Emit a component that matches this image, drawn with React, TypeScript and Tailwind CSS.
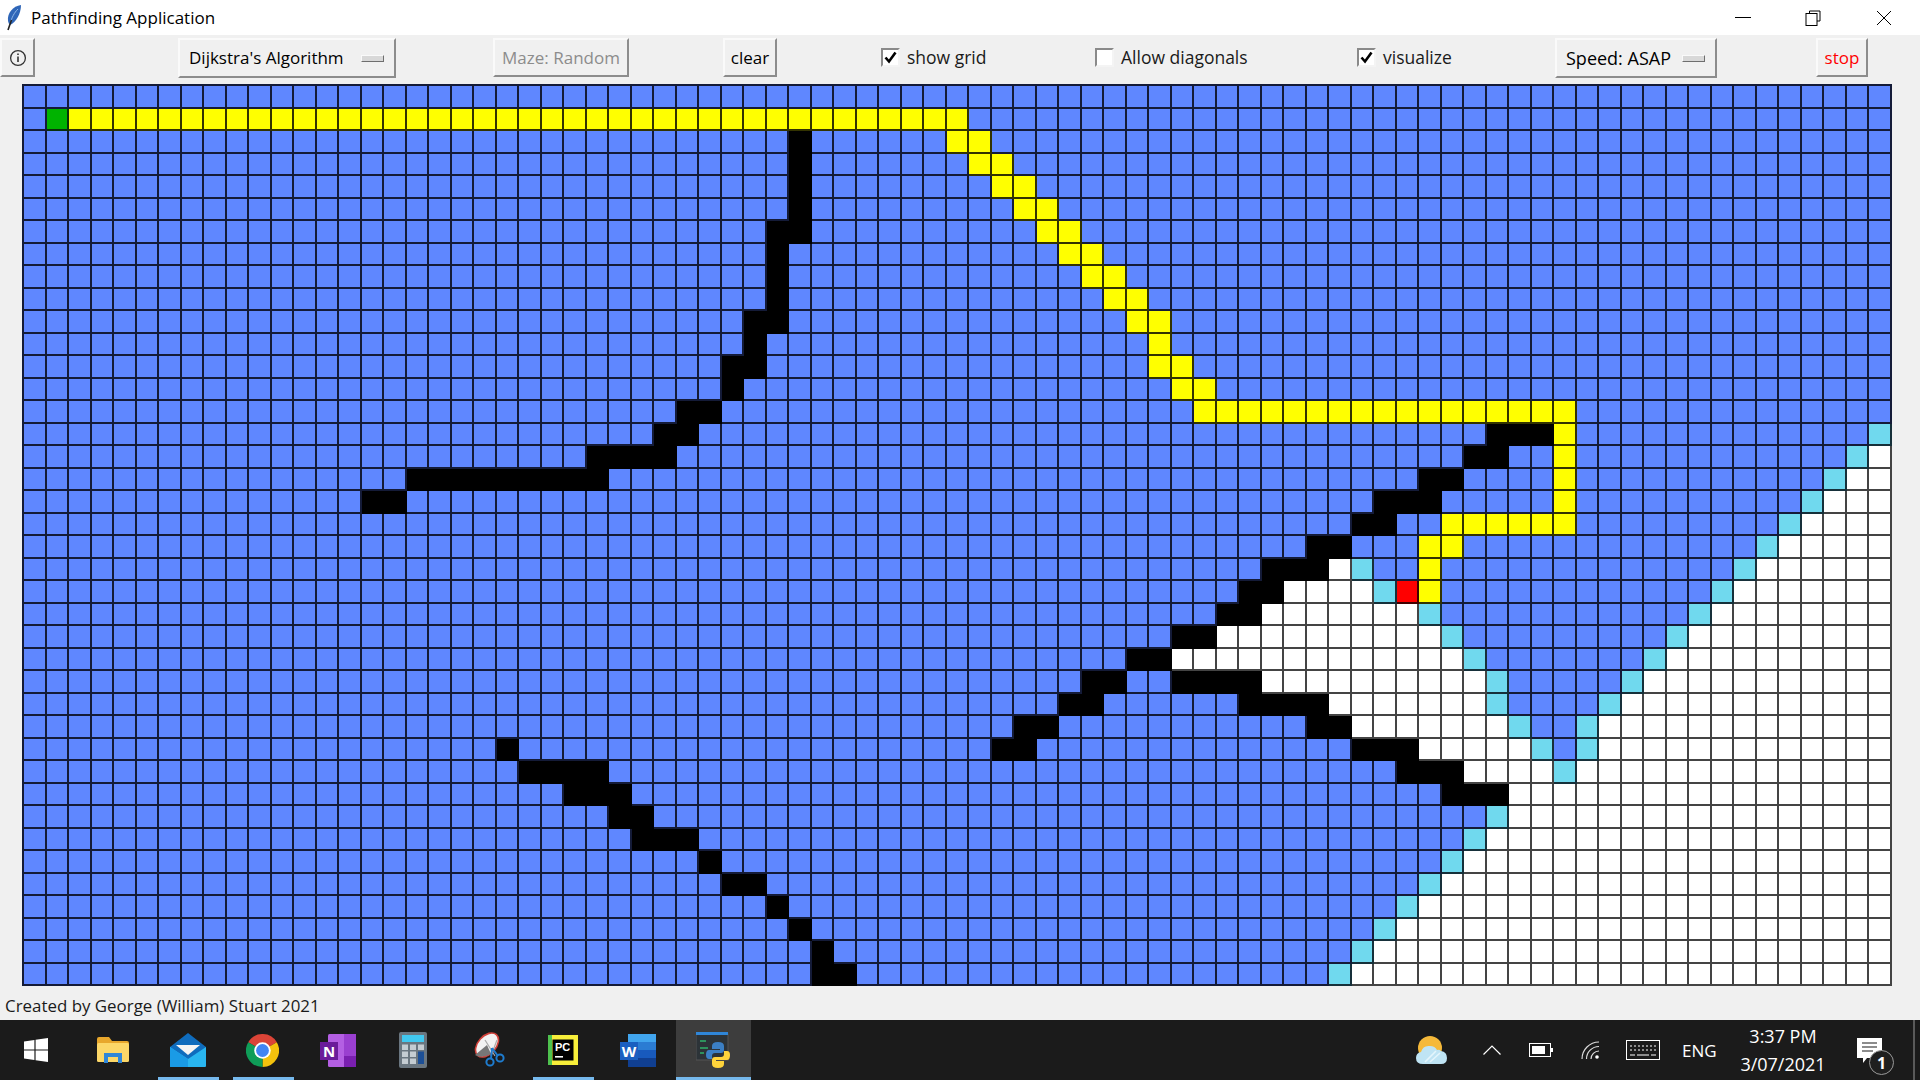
import type { ReactNode } from "react";

const COLS = 83;
const ROWS = 40;

// [row, from col, to col] ranges, painted in order over the blue background
const WALLS: number[][] = [
  [2, 34, 34], [3, 34, 34], [4, 34, 34], [5, 34, 34], [6, 33, 34], [7, 33, 33], [8, 33, 33], [9, 33, 33],
  [10, 32, 33], [11, 32, 32], [12, 31, 32], [13, 31, 31], [14, 29, 30], [15, 28, 29], [16, 25, 28], [17, 17, 25], [18, 15, 16],
  [15, 65, 67], [16, 64, 65], [17, 62, 63], [18, 60, 62], [19, 59, 60], [20, 57, 58], [21, 55, 57], [22, 54, 55], [23, 53, 54],
  [24, 51, 52], [25, 49, 50], [26, 47, 48], [27, 46, 47], [28, 44, 45], [29, 43, 44],
  [26, 51, 54], [27, 54, 57], [28, 57, 58], [29, 59, 61], [30, 61, 63], [31, 63, 65],
  [29, 21, 21], [30, 22, 25], [31, 24, 26], [32, 26, 27], [33, 27, 29], [34, 30, 30], [35, 31, 32], [36, 33, 33],
  [37, 34, 34], [38, 35, 35], [39, 35, 36],
];

const PATH: number[][] = [
  [1, 2, 41], [2, 41, 42], [3, 42, 43], [4, 43, 44], [5, 44, 45], [6, 45, 46], [7, 46, 47], [8, 47, 48], [9, 48, 49],
  [10, 49, 50], [11, 50, 50], [12, 50, 51], [13, 51, 52], [14, 52, 68], [15, 68, 68], [16, 68, 68], [17, 68, 68], [18, 68, 68],
  [19, 63, 68], [20, 62, 63], [21, 62, 62], [22, 62, 62],
];

const VISITED: number[][] = [
  [16, 82, 82], [17, 81, 82], [18, 80, 82], [19, 79, 82], [20, 78, 82], [21, 58, 58], [21, 77, 82], [22, 56, 59], [22, 76, 82],
  [23, 55, 61], [23, 75, 82], [24, 53, 62], [24, 74, 82], [25, 51, 63], [25, 73, 82], [26, 55, 64], [26, 72, 82], [27, 58, 64], [27, 71, 82],
  [28, 59, 65], [28, 70, 82], [29, 62, 66], [29, 70, 82], [30, 64, 67], [30, 69, 82], [31, 66, 82], [32, 66, 82], [33, 65, 82],
  [34, 64, 82], [35, 63, 82], [36, 62, 82], [37, 61, 82], [38, 60, 82], [39, 59, 82],
];

const FRONTIER: number[][] = [
  [15, 82], [16, 81], [17, 80], [18, 79], [19, 78], [20, 77], [21, 59], [21, 76], [22, 60], [22, 75], [23, 62], [23, 74], [24, 63], [24, 73],
  [25, 64], [25, 72], [26, 65], [26, 71], [27, 65], [27, 70], [28, 66], [28, 69], [29, 67], [29, 69], [30, 68], [32, 65], [33, 64],
  [34, 63], [35, 62], [36, 61], [37, 60], [38, 59], [39, 58],
];

const CELL_CLASS: Record<string, string> = {
  blue: "bg-[#5f87ff] border-[#141b38]",
  white: "bg-white border-[#444444]",
  yellow: "bg-[#ffff00] border-[#333300]",
  black: "bg-black border-black",
  cyan: "bg-[#70d9ee] border-[#16303a]",
  green: "bg-[#00b300] border-[#0a300a]",
  red: "bg-[#ff0000] border-[#400000]",
};

const buildGrid = () => {
  const grid: string[][] = Array.from({ length: ROWS }, () => Array(COLS).fill("blue"));
  const paint = (list: number[][], kind: string) => {
    list.forEach(([r, a, b]) => {
      for (let c = a; c <= b; c++) grid[r][c] = kind;
    });
  };
  paint(VISITED, "white");
  paint(WALLS, "black");
  paint(PATH, "yellow");
  FRONTIER.forEach(([r, c]) => (grid[r][c] = "cyan"));
  grid[1][1] = "green";
  grid[22][61] = "red";
  return grid;
};

const GRID = buildGrid();

const raised = "border-2 border-t-[#fafafa] border-l-[#fafafa] border-r-[#8c8c8c] border-b-[#8c8c8c] bg-[#f0f0f0]";
const uiFont = "font-['Open_Sans',sans-serif]";

const Indicator = () => (
  <span className="block w-[23px] h-[7px] border border-t-[#fafafa] border-l-[#fafafa] border-r-[#6e6e6e] border-b-[#6e6e6e] bg-[#d8d8d8]" />
);

const Check = ({ label, checked, width }: { label: string; checked?: boolean; width: string }) => (
  <div className={`flex items-start pt-[10px] ${width}`}>
    <span className="w-[19px] h-[19px] bg-white border-2 border-t-[#8a8a8a] border-l-[#8a8a8a] border-r-[#f4f4f4] border-b-[#f4f4f4] flex items-center justify-center">
      {checked && (
        <svg width="13" height="13" viewBox="0 0 13 13">
          <path d="M1.5 6.5 L5 10.5 L11.5 1.5" fill="none" stroke="#000" strokeWidth="2.6" />
        </svg>
      )}
    </span>
    <span className="ml-[7px] text-[17.5px] leading-[19px] text-[#1a1a1a]">{label}</span>
  </div>
);

const Feather = () => (
  <svg width="16" height="26" viewBox="0 0 16 26" className="ml-[6px]">
    <path d="M15 0 C7 1 1 8 2 16 C2.5 18 3 19 4 20 C10 17 15 9 15 0 Z" fill="#2f66b8" />
    <path d="M12 4 C8 8 6 12 4 19" fill="none" stroke="#8fb6e8" strokeWidth="1" />
    <path d="M5.5 15 L2 25" stroke="#222" strokeWidth="1.6" fill="none" />
  </svg>
);

const WindowControls = () => (
  <div className="ml-auto flex items-center">
    <span className="block w-[16px] h-[1px] bg-black mr-[54px]" />
    <svg width="16" height="16" viewBox="0 0 16 16" className="mr-[55px]">
      <path d="M4.5 3 V1 H15 V11 H12" fill="none" stroke="#000" />
      <rect x="1" y="3.5" width="11" height="12" fill="none" stroke="#000" />
    </svg>
    <svg width="16" height="16" viewBox="0 0 16 16" className="mr-[28px]">
      <path d="M1 1 L15 15 M15 1 L1 15" stroke="#000" strokeWidth="1" />
    </svg>
  </div>
);

const WinLogo = () => (
  <svg width="24" height="24" viewBox="0 0 24 24">
    <path d="M0 3.4 L10.4 2 V11.4 H0 Z M11.6 1.8 L24 0 V11.4 H11.6 Z M0 12.6 H10.4 V22 L0 20.6 Z M11.6 12.6 H24 V24 L11.6 22.2 Z" fill="#fff" />
  </svg>
);

const Explorer = () => (
  <svg width="32" height="26" viewBox="0 0 32 26">
    <path d="M0 2 Q0 0 2 0 H12 L15 4 H30 Q32 4 32 6 V8 H0 Z" fill="#e8a72c" />
    <rect x="0" y="6" width="32" height="19" rx="1.5" fill="#fcd768" />
    <path d="M7 26 V16 H25 V26 H21 V20 H11 V26 Z" fill="#2f86d8" />
  </svg>
);

const Mail = () => (
  <svg width="36" height="34" viewBox="0 0 36 34">
    <path d="M18 0 L36 14 V33 H0 V14 Z" fill="#0f6cbd" />
    <path d="M6 12 H30 L18 22 Z" fill="#f4f4f4" />
    <path d="M0 14 L18 26 L36 14 V33 Q36 34 35 34 H1 Q0 34 0 33 Z" fill="#29b6f0" />
    <path d="M0 14 L18 26 V34 H1 Q0 34 0 33 Z" fill="#1a9be6" />
  </svg>
);

const Chrome = () => (
  <svg width="33" height="33" viewBox="0 0 32 32">
    <path d="M16 16 L2.14 8 A16 16 0 0 1 29.86 8 Z" fill="#db4437" />
    <path d="M16 16 L29.86 8 A16 16 0 0 1 16 32 Z" fill="#f4c20d" />
    <path d="M16 16 L16 32 A16 16 0 0 1 2.14 8 Z" fill="#0f9d58" />
    <circle cx="16" cy="16" r="8" fill="#fff" />
    <circle cx="16" cy="16" r="6.2" fill="#4285f4" />
  </svg>
);

const OneNote = () => (
  <svg width="36" height="33" viewBox="0 0 36 33">
    <rect x="8" y="0" width="28" height="33" rx="1.5" fill="#b45fe3" />
    <rect x="24" y="0" width="12" height="33" fill="#9a3fd0" />
    <rect x="24" y="22" width="12" height="11" fill="#7a1fb0" />
    <rect x="0" y="8" width="18" height="18" fill="#6a1b9a" />
    <text x="9" y="22.5" textAnchor="middle" fontSize="15" fontWeight="700" fill="#fff" fontFamily="'Open Sans',sans-serif">N</text>
  </svg>
);

const Calculator = () => (
  <svg width="28" height="36" viewBox="0 0 28 36">
    <rect width="28" height="36" rx="2" fill="#6a7680" />
    <rect x="3" y="3" width="22" height="7" fill="#41c8f0" />
    {[12.5, 19.5, 26.5].map((y) => (
      <g key={y}>
        <rect x="3" y={y} width="6" height="5.5" fill="#c4ccd2" />
        <rect x="11" y={y} width="6" height="5.5" fill="#c4ccd2" />
      </g>
    ))}
    <rect x="19" y="12.5" width="6" height="5.5" fill="#c4ccd2" />
    <rect x="19" y="19.5" width="6" height="12.5" fill="#1c4f96" />
  </svg>
);

const Snip = () => (
  <svg width="34" height="36" viewBox="0 0 34 36">
    <ellipse cx="16" cy="13" rx="9" ry="14" transform="rotate(42 16 13)" fill="#f2f2f2" stroke="#d0413a" strokeWidth="1.6" />
    <path d="M4 23 L16 13 L20 22 Q10 27 4 23 Z" fill="#777" />
    <path d="M14 8 L24 24 M26 8 L20 24" stroke="#aaa" strokeWidth="1.2" fill="none" />
    <circle cx="19" cy="30" r="3.6" fill="none" stroke="#1e7ccf" strokeWidth="2" />
    <circle cx="29" cy="26" r="3.6" fill="none" stroke="#1e7ccf" strokeWidth="2" />
    <path d="M21 16 L20 27 M21 16 L27 24" stroke="#1e7ccf" strokeWidth="2" fill="none" />
  </svg>
);

const PyCharm = () => (
  <svg width="30" height="30" viewBox="0 0 30 30">
    <rect width="30" height="30" fill="#f7ee3a" />
    <path d="M0 0 H4 V30 H0 Z" fill="#4ec24e" />
    <rect x="4.5" y="4.5" width="21" height="21" fill="#000" />
    <text x="7" y="16" fontSize="11" fontWeight="700" fill="#fff" fontFamily="'Liberation Sans',sans-serif">PC</text>
    <rect x="7" y="21" width="8" height="1.6" fill="#fff" />
  </svg>
);

const Word = () => (
  <svg width="36" height="33" viewBox="0 0 36 33">
    <rect x="8" y="0" width="28" height="33" rx="1.5" fill="#2b7cd3" />
    <rect x="8" y="0" width="28" height="8" fill="#41a5ee" />
    <rect x="8" y="16" width="28" height="8" fill="#185abd" />
    <rect x="8" y="24" width="28" height="9" fill="#103f91" />
    <rect x="0" y="8" width="18" height="18" fill="#1a5fc0" />
    <text x="9" y="22.5" textAnchor="middle" fontSize="15" fontWeight="700" fill="#fff" fontFamily="'Open Sans',sans-serif">W</text>
  </svg>
);

const PythonApp = () => (
  <svg width="34" height="36" viewBox="0 0 34 36">
    <rect x="0" y="2" width="32" height="26" fill="#2c3338" stroke="#555" strokeWidth="1" />
    <rect x="0" y="0" width="32" height="3" fill="#2f86d8" />
    <path d="M4 9 H10 M4 16 H12 M4 21 H8" stroke="#2fb36a" strokeWidth="1.6" />
    <path d="M22 10 Q16 10 16 14 V17 H24 V18 H13 Q10 18 10 23 Q10 27 13 27 H16 V24 Q16 21 19 21 H25 Q28 21 28 18 V14 Q28 10 22 10 Z" fill="#3b7fc4" />
    <path d="M22 36 Q28 36 28 32 V29 H20 V28 H31 Q34 28 34 23 Q34 19 31 19 H28 V22 Q28 25 25 25 H19 Q16 25 16 28 V32 Q16 36 22 36 Z" fill="#ffd43b" />
  </svg>
);

const Weather = () => (
  <svg width="31" height="29" viewBox="0 0 31 29">
    <circle cx="14" cy="12" r="12" fill="#f5b93a" />
    <path d="M7 28 Q0 28 0 22 Q0 17 5 16 Q7 9 14 10 Q19 10 21 14 Q23 13 25 15 Q31 16 31 22 Q31 28 25 28 Z" fill="#bfe4f4" />
    <path d="M9 26 L20 15 M14 26 L24 17" stroke="#e4f5fc" strokeWidth="1.6" fill="none" />
  </svg>
);

const Tray = () => (
  <div className="flex items-center ml-auto text-white">
    <Weather />
    <svg width="18" height="10" viewBox="0 0 18 10" className="ml-[36px]">
      <path d="M0.5 9.5 L9 1 L17.5 9.5" fill="none" stroke="#fff" strokeWidth="1.2" />
    </svg>
    <svg width="24" height="14" viewBox="0 0 24 14" className="ml-[28px]">
      <rect x="0.5" y="0.5" width="21" height="13" fill="none" stroke="#fff" />
      <rect x="3" y="3" width="13" height="8" fill="#fff" />
      <rect x="22" y="5" width="2" height="4" fill="#fff" />
    </svg>
    <svg width="19" height="19" viewBox="0 0 19 19" className="ml-[28px]">
      <path d="M1 18 A17 17 0 0 1 18 1 M5.5 18 A12.5 12.5 0 0 1 18 5.5 M10 18 A8 8 0 0 1 18 10" fill="none" stroke="#ddd" strokeWidth="1.2" />
      <circle cx="16" cy="16" r="1.8" fill="#fff" />
    </svg>
    <svg width="34" height="20" viewBox="0 0 34 20" className="ml-[26px]">
      <rect x="0.5" y="0.5" width="33" height="19" fill="none" stroke="#fff" />
      <path d="M4 6 H30 M4 10 H30" stroke="#fff" strokeDasharray="2 2" />
      <path d="M4 15 H9 M11 15 H23 M25 15 H30" stroke="#fff" />
    </svg>
    <span className="ml-[22px] w-[34px] text-[17px] leading-none">ENG</span>
    <div className="ml-[24px] w-[86px] flex flex-col items-center gap-[8px] text-[18px] leading-[20px]">
      <span>3:37 PM</span>
      <span>3/07/2021</span>
    </div>
    <div className="relative ml-[31px] w-[26px] h-[60px]">
      <svg width="25" height="26" viewBox="0 0 25 26" className="absolute left-0 top-[18px]">
        <path d="M0 0 H25 V20 H10 L6 25 V20 H0 Z" fill="#fff" />
        <path d="M5 5 H20 M5 9 H20 M5 13 H16" stroke="#1a1a1a" strokeWidth="1.2" />
      </svg>
      <span className="absolute left-[12px] top-[30px] w-[25px] h-[25px] rounded-full border border-[#9a9a9a] bg-[#1f1f1f] flex items-center justify-center text-[16px] font-bold leading-none">
        1
      </span>
    </div>
    <span className="ml-[30px] w-[7px] h-[60px] border-l-2 border-[#5a5a5a]" />
  </div>
);

const Slot = ({ active, open, children }: { active?: boolean; open?: boolean; children: ReactNode }) => (
  <div className={`relative w-[75px] h-[60px] pr-[2px] flex items-center justify-center ${active ? "bg-[#3d3d3d]" : ""}`}>
    {children}
    {open && <span className={`absolute bottom-0 h-[3px] bg-[#76b9ed] ${active ? "left-0 right-0" : "left-[7px] right-[7px]"}`} />}
  </div>
);

const App = () => {
  return (
    <div className={`w-[1920px] h-[1080px] flex flex-col overflow-hidden bg-[#f0f0f0] text-black ${uiFont}`}>
      <div className="h-[35px] bg-white flex items-center">
        <Feather />
        <span className="ml-[9px] text-[17px] leading-none">Pathfinding Application</span>
        <WindowControls />
      </div>

      <div className="h-[49px] flex items-start pt-[3px] text-[17px]">
        <button className={`${raised} w-[35px] h-[39px] flex items-center justify-center`}>
          <svg width="18" height="18" viewBox="0 0 18 18">
            <circle cx="9" cy="9" r="7.4" fill="none" stroke="#333" strokeWidth="1.3" />
            <path d="M9 7.5 V13 M9 4.5 V6" stroke="#333" strokeWidth="1.6" />
          </svg>
        </button>
        <button className={`${raised} ml-[143px] w-[218px] h-[40px] flex items-center justify-between pl-[9px] pr-[10px]`}>
          <span>Dijkstra's Algorithm</span>
          <Indicator />
        </button>
        <button className={`${raised} ml-[97px] w-[136px] h-[39px] text-[#8c8c8c] flex items-center justify-center`}>Maze: Random</button>
        <button className={`${raised} ml-[94px] w-[54px] h-[39px] flex items-center justify-center`}>clear</button>
        <div className="ml-[104px] flex">
          <Check label="show grid" checked width="w-[214px]" />
          <Check label="Allow diagonals" width="w-[262px]" />
          <Check label="visualize" checked width="w-[198px]" />
        </div>
        <button className={`${raised} w-[162px] h-[40px] flex items-center justify-between pl-[9px] pr-[10px]`}>
          <span className="text-[18px]">Speed: ASAP</span>
          <Indicator />
        </button>
        <button className={`${raised} ml-[99px] w-[52px] h-[39px] text-[#ff0000] flex items-center justify-center`}>stop</button>
      </div>

      <div className="ml-[22px] w-[1870px] border-l-2 border-t-2 border-[#141b38] grid grid-cols-[repeat(83,22.5px)] grid-rows-[repeat(40,22.5px)]">
        {GRID.flatMap((row, r) =>
          row.map((kind, c) => <div key={`${r}-${c}`} className={`border-r-2 border-b-2 ${CELL_CLASS[kind]}`} />)
        )}
      </div>

      <div className="flex-1 flex items-center pl-[5px] pt-[7px] text-[16.9px] leading-none text-[#1a1a1a]">
        Created by George (William) Stuart 2021
      </div>

      <div className="h-[60px] bg-[#1b1b1b] flex items-center">
        <div className="w-[76px] pr-[4px] flex justify-center"><WinLogo /></div>
        <Slot><Explorer /></Slot>
        <Slot open><Mail /></Slot>
        <Slot open><Chrome /></Slot>
        <Slot><OneNote /></Slot>
        <Slot><Calculator /></Slot>
        <Slot><Snip /></Slot>
        <Slot open><PyCharm /></Slot>
        <Slot><Word /></Slot>
        <Slot active open><PythonApp /></Slot>
        <Tray />
      </div>
    </div>
  );
};

export default App;
